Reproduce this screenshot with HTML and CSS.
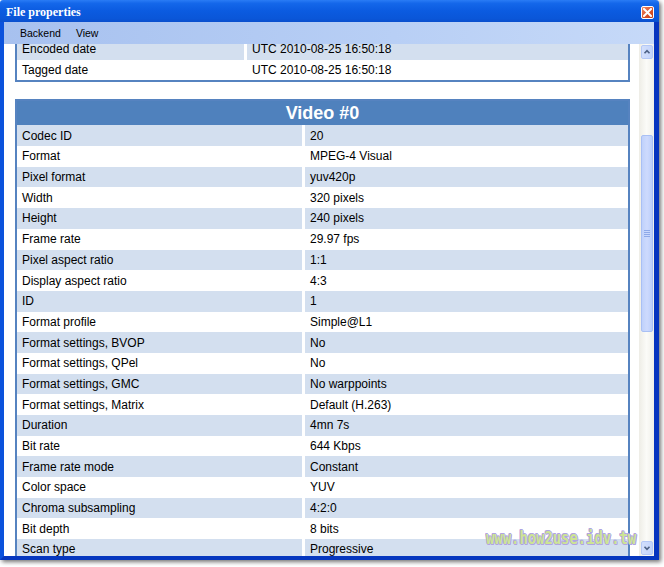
FILE: index.html
```html
<!DOCTYPE html>
<html lang="en">
<head>
    <meta charset="UTF-8">
    <title>File properties</title>
    <link rel="stylesheet" href="styles.css">
</head>
<body>
    <div class="window">
        <div class="titlebar">
            <span class="title">File properties</span>
            <span class="close">
                <svg width="9" height="9" viewBox="0 0 9 9"><path d="M1 1 L8 8 M8 1 L1 8" stroke="#fff" stroke-width="2" stroke-linecap="square"/></svg>
            </span>
        </div>

        <div class="frame">
            <div class="menubar">
                <span class="menu-item">Backend</span>
                <span class="menu-item">View</span>
            </div>

            <div class="client">
                <div class="content">
                    <table class="info general">
                        <colgroup><col class="label-col"><col></colgroup>
                        <tr class="odd"><td class="label">Encoded date</td><td>UTC 2010-08-25 16:50:18</td></tr>
                        <tr><td class="label">Tagged date</td><td>UTC 2010-08-25 16:50:18</td></tr>
                    </table>

                    <table class="info video">
                        <colgroup><col class="label-col"><col></colgroup>
                        <tr><th colspan="2">Video #0</th></tr>
                        <tr class="odd"><td class="label">Codec ID</td><td>20</td></tr>
                        <tr><td class="label">Format</td><td>MPEG-4 Visual</td></tr>
                        <tr class="odd"><td class="label">Pixel format</td><td>yuv420p</td></tr>
                        <tr><td class="label">Width</td><td>320 pixels</td></tr>
                        <tr class="odd"><td class="label">Height</td><td>240 pixels</td></tr>
                        <tr><td class="label">Frame rate</td><td>29.97 fps</td></tr>
                        <tr class="odd"><td class="label">Pixel aspect ratio</td><td>1:1</td></tr>
                        <tr><td class="label">Display aspect ratio</td><td>4:3</td></tr>
                        <tr class="odd"><td class="label">ID</td><td>1</td></tr>
                        <tr><td class="label">Format profile</td><td>Simple@L1</td></tr>
                        <tr class="odd"><td class="label">Format settings, BVOP</td><td>No</td></tr>
                        <tr><td class="label">Format settings, QPel</td><td>No</td></tr>
                        <tr class="odd"><td class="label">Format settings, GMC</td><td>No warppoints</td></tr>
                        <tr><td class="label">Format settings, Matrix</td><td>Default (H.263)</td></tr>
                        <tr class="odd"><td class="label">Duration</td><td>4mn 7s</td></tr>
                        <tr><td class="label">Bit rate</td><td>644 Kbps</td></tr>
                        <tr class="odd"><td class="label">Frame rate mode</td><td>Constant</td></tr>
                        <tr><td class="label">Color space</td><td>YUV</td></tr>
                        <tr class="odd"><td class="label">Chroma subsampling</td><td>4:2:0</td></tr>
                        <tr><td class="label">Bit depth</td><td>8 bits</td></tr>
                        <tr class="odd"><td class="label">Scan type</td><td>Progressive</td></tr>
                    </table>
                </div>

                <div class="scrollbar">
                    <div class="sb-btn">
                        <svg width="12" height="14" viewBox="0 0 12 14"><path d="M3 8.5 L6 5.5 L9 8.5" fill="none" stroke="#4d6185" stroke-width="2"/></svg>
                    </div>
                    <div class="sb-track">
                        <div class="sb-thumb">
                            <span class="grip"></span>
                        </div>
                    </div>
                    <div class="sb-btn">
                        <svg width="12" height="14" viewBox="0 0 12 14"><path d="M3 5.5 L6 8.5 L9 5.5" fill="none" stroke="#4d6185" stroke-width="2"/></svg>
                    </div>
                </div>

                <div class="watermark">www.how2use.idv.tw</div>
            </div>
        </div>
    </div>
</body>
</html>
```

FILE: styles.css
```css
*{
    box-sizing: border-box;
    margin: 0;
    padding: 0;
}

body{
    background: #fff;
    font-family: 'Liberation Sans', Arial, sans-serif;
    width: 664px;
    height: 567px;
    overflow: hidden;
}

.window{
    width: 659px;
    height: 560px;
    display: flex;
    flex-direction: column;
    box-shadow: 2px 2px 4px rgba(0, 0, 0, 0.55);
    border-radius: 3px 3px 0 0;
}

/* title bar */
.titlebar{
    height: 22px;
    display: flex;
    align-items: center;
    justify-content: space-between;
    padding: 0 5px 0 6px;
    background: linear-gradient(#2a7cf5 0%, #1467ea 15%, #0b5be0 50%, #0a56d8 85%, #0a4fcd 100%);
    border-radius: 3px 3px 0 0;
}

.title{
    color: #fff;
    font-family: 'Liberation Serif', 'Times New Roman', serif;
    font-weight: bold;
    font-size: 12px;
    padding-top: 3px;
}

.close{
    width: 13px;
    height: 13px;
    margin-top: 2px;
    display: flex;
    align-items: center;
    justify-content: center;
    border: 1px solid #fff;
    border-radius: 2px;
    background: linear-gradient(135deg, #ee8a66, #d9542b 55%, #c4401b);
}

/* frame */
.frame{
    flex: 1;
    display: flex;
    flex-direction: column;
    border-left: 4px solid #0b52dc;
    border-right: 5px solid #0634bf;
    border-bottom: 4px solid #0637bf;
    min-height: 0;
}

.menubar{
    height: 22px;
    display: flex;
    align-items: center;
    padding-left: 8px;
    background: linear-gradient(90deg, #a7c1ef, #b8cff5 60%, #c6d9f8);
    font-size: 10.5px;
    color: #000;
}

.menu-item{
    padding: 0 7px 0 8px;
}

.client{
    flex: 1;
    display: flex;
    position: relative;
    min-height: 0;
}

.content{
    flex: 1;
    overflow: hidden;
    background: #fff;
    padding: 0 9px 0 11px;
}

/* tables */
.info{
    width: 615px;
    table-layout: fixed;
    border-collapse: separate;
    border-spacing: 0;
    border: 2px solid #5683c0;
    font-size: 12px;
    color: #000;
}

.info tr{
    height: 20.7px;
}

.info td{
    padding: 0 5px;
    white-space: nowrap;
    overflow: hidden;
    vertical-align: middle;
}

.info td.label{
    border-right: 3px solid #fff;
}

.info tr.odd td{
    background: #d3dfef;
}

.general{
    margin-top: -5px;
    border-top: 0;
}

.general .label-col{
    width: 230px;
}

.video{
    margin-top: 17px;
}

.video .label-col{
    width: 288px;
}

.video th{
    height: 24px;
    background: #4f81bd;
    color: #fff;
    font-size: 18px;
    font-weight: bold;
    text-align: center;
    vertical-align: middle;
}

/* scrollbar */
.scrollbar{
    width: 15px;
    display: flex;
    flex-direction: column;
    background: linear-gradient(90deg, #eeede6, #fbfbf8 50%, #f0efe9);
}

.sb-btn{
    height: 14px;
    margin: 1px 1px 1px 2px;
    border: 1px solid #b4c8f6;
    border-radius: 2px;
    background: linear-gradient(90deg, #d2dffc, #c3d4fb);
    display: flex;
    align-items: center;
    justify-content: center;
}

.sb-btn svg{
    display: block;
}

.sb-track{
    flex: 1;
}

.sb-thumb{
    margin: 75px 1px 0 2px;
    height: 197px;
    border: 1px solid #a9c0f4;
    border-radius: 2px;
    background: linear-gradient(90deg, #bfd1fb, #cddafd 50%, #bccffb);
    display: flex;
    align-items: center;
    justify-content: center;
}

.grip{
    width: 6px;
    height: 7px;
    background: repeating-linear-gradient(#8ea9e8 0 1px, transparent 1px 2px);
}

/* overlay watermark */
.watermark{
    position: absolute;
    left: 482px;
    bottom: 8px;
    font-family: 'DejaVu Sans Mono', monospace;
    font-weight: bold;
    font-size: 18px;
    color: #cde494;
    transform: scaleX(0.77);
    transform-origin: left center;
    text-shadow: 1px 0 #b0a4e2, -1px 0 #b0a4e2, 0 1px #b0a4e2, 0 -1px #b0a4e2, 1px 1px #b0a4e2, -1px -1px #b0a4e2;
}
```
